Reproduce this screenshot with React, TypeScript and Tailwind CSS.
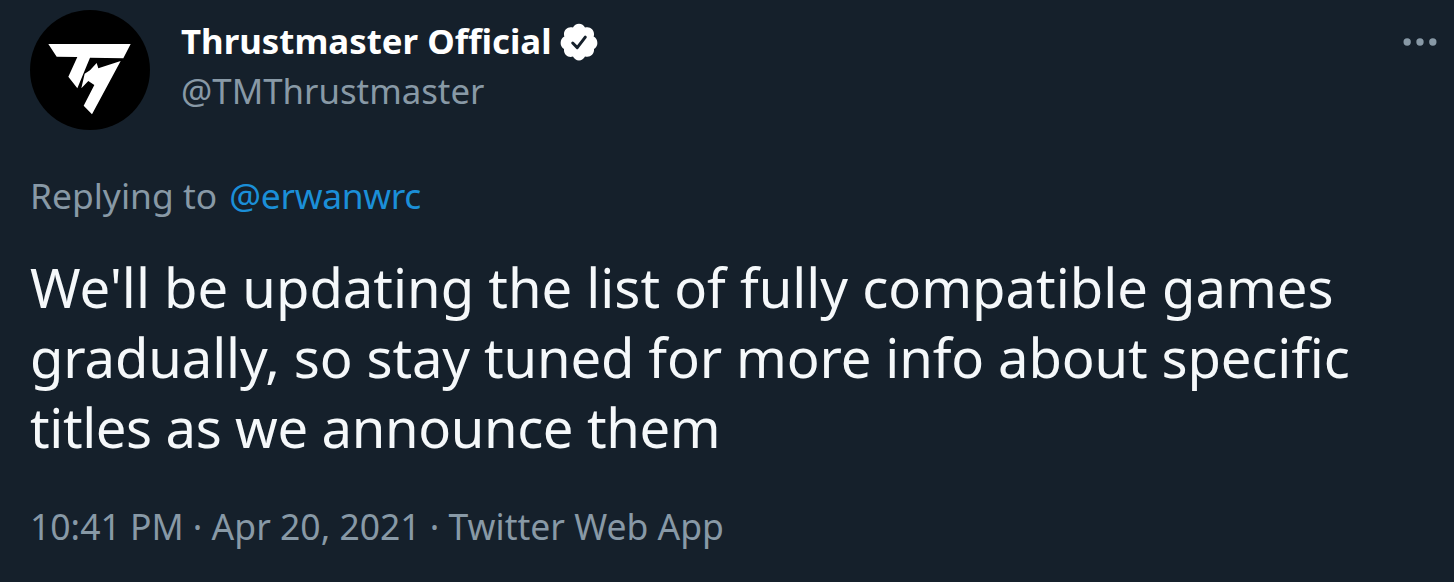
import { MoreHorizontal } from 'lucide-react';

function Logo() {
  return (
    <svg viewBox="-30 -75 360 360" className="h-[120px] w-[120px] shrink-0">
      <circle cx="150" cy="105" r="180" fill="#000" />
      <path d="M25 27 L272 27 L250 70 L150 68 L112 160 L85 125 L112 66 L50 65 Z" fill="#fff" />
      <path d="M170 84 L175 100 L242 78 L156 238 L131 212 L163 150 L145 138 L124 160 L134 116 L150 106 Z" fill="#fff" />
    </svg>
  );
}

function Verified() {
  return (
    <svg viewBox="0 0 24 24" className="ml-[6px] mt-[2px] h-[42px] w-[42px]">
      <path
        fill="#fff"
        d="M22.5 12.5c0-1.58-.875-2.95-2.148-3.6.154-.435.238-.905.238-1.4 0-2.21-1.71-3.998-3.818-3.998-.47 0-.92.084-1.336.25C14.818 2.415 13.51 1.5 12 1.5s-2.816.917-3.437 2.25c-.415-.165-.866-.25-1.336-.25-2.11 0-3.818 1.79-3.818 4 0 .494.083.964.237 1.4-1.272.65-2.147 2.018-2.147 3.6 0 1.495.782 2.798 1.942 3.486-.02.17-.032.34-.032.514 0 2.21 1.708 4 3.818 4 .47 0 .92-.086 1.335-.25.62 1.334 1.926 2.25 3.437 2.25 1.512 0 2.818-.916 3.437-2.25.415.163.865.248 1.336.248 2.11 0 3.818-1.79 3.818-4 0-.174-.012-.344-.033-.513 1.158-.687 1.943-1.99 1.943-3.484z"
      />
      <path fill="none" stroke="#15202b" strokeWidth="1.7" strokeLinecap="round" strokeLinejoin="round" d="M8.4 12.6l2.6 2.6 4.6-6" />
    </svg>
  );
}

export default function App() {
  return (
    <div className="h-[582px] w-[1454px] overflow-hidden bg-[#15202b] pl-[30px] pt-[10px] font-['Noto_Sans',sans-serif] text-white">
      {/* Header */}
      <div className="flex items-start">
        <Logo />
        <div className="ml-[31px] flex-1 pt-[6px]">
          <div className="flex h-[50px] items-center">
            <span className="text-[34.8px] font-bold">Thrustmaster Official</span>
            <Verified />
          </div>
          <div className="text-[34.8px] leading-[50px] text-[#8899a6]">@TMThrustmaster</div>
        </div>
        <MoreHorizontal className="mr-[12px] mt-[10px] h-[44px] w-[44px] text-[#8899a6]" strokeWidth={2} />
      </div>

      {/* Reply line */}
      <div className="mt-[40px] text-[35.4px] leading-[50px] text-[#8899a6]">
        Replying to <span className="ml-[3px] tracking-[-0.33px] text-[#1b8fd8]">@erwanwrc</span>
      </div>

      {/* Tweet body */}
      <div className="mt-[32px] text-[54.4px] leading-[70px] text-[#f5f8fa]">
        <div>We'll be updating the list of fully compatible games</div>
        <div className="tracking-[-0.13px]">gradually, so stay tuned for more info about specific</div>
        <div className="tracking-[-0.38px]">titles as we announce them</div>
      </div>

      {/* Meta */}
      <div className="mt-[39px] text-[35.5px] leading-[50px] text-[#8899a6]">
        10:41 PM · Apr 20, 2021 · Twitter Web App
      </div>
    </div>
  );
}
